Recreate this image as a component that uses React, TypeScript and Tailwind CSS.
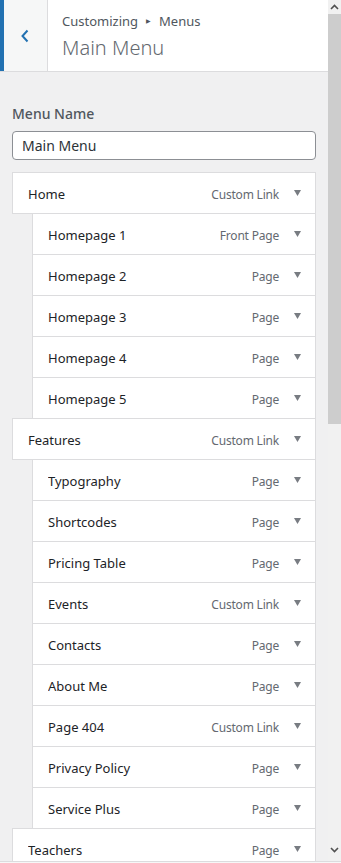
import React from "react";

type Item = { title: string; type: string; depth: number };

const items: Item[] = [
  { title: "Home", type: "Custom Link", depth: 0 },
  { title: "Homepage 1", type: "Front Page", depth: 1 },
  { title: "Homepage 2", type: "Page", depth: 1 },
  { title: "Homepage 3", type: "Page", depth: 1 },
  { title: "Homepage 4", type: "Page", depth: 1 },
  { title: "Homepage 5", type: "Page", depth: 1 },
  { title: "Features", type: "Custom Link", depth: 0 },
  { title: "Typography", type: "Page", depth: 1 },
  { title: "Shortcodes", type: "Page", depth: 1 },
  { title: "Pricing Table", type: "Page", depth: 1 },
  { title: "Events", type: "Custom Link", depth: 1 },
  { title: "Contacts", type: "Page", depth: 1 },
  { title: "About Me", type: "Page", depth: 1 },
  { title: "Page 404", type: "Custom Link", depth: 1 },
  { title: "Privacy Policy", type: "Page", depth: 1 },
  { title: "Service Plus", type: "Page", depth: 1 },
  { title: "Teachers", type: "Page", depth: 0 },
];

const MenuItem = ({ item }: { item: Item }) => (
  <div className={item.depth ? "pl-5 -mt-px" : "-mt-px"}>
    <div className="flex items-center h-[42px] bg-white border border-[#dcdcde] pl-[15px] pr-[14px] pt-[3px]">
      <span className="flex-1 text-[13px] text-[#1d2327] truncate">{item.title}</span>
      <span className="text-[12px] tracking-[-0.2px] text-[#646970]">{item.type}</span>
      <svg width="7" height="6" viewBox="0 0 7 6" className="ml-[15px] mb-[3px]">
        <path d="M0 0 L7 0 L3.5 6 Z" fill="#787c82" />
      </svg>
    </div>
  </div>
);

const Scrollbar = () => (
  <div className="w-[13px] flex flex-col bg-[#f1f1f1] shrink-0">
    <div className="h-[14px] flex items-center justify-center">
      <svg width="9" height="6" viewBox="0 0 9 6">
        <path d="M1 5 L4.5 1.5 L8 5" stroke="#505050" strokeWidth="1.6" fill="none" />
      </svg>
    </div>
    <div className="h-[410px] bg-[#cdcdcd]" />
    <div className="flex-1" />
    <div className="h-[20px] flex items-start justify-center pt-[6px]">
      <svg width="9" height="6" viewBox="0 0 9 6">
        <path d="M1 1 L4.5 4.5 L8 1" stroke="#505050" strokeWidth="1.6" fill="none" />
      </svg>
    </div>
  </div>
);

export default function App() {
  return (
    <div
      className="w-[341px] h-[863px] flex flex-col overflow-hidden bg-[#f0f0f1]"
      style={{ fontFamily: '"Noto Sans", "Open Sans", sans-serif' }}
    >
      <div className="flex flex-1 min-h-0">
        <div className="w-[328px] flex flex-col min-h-0 overflow-hidden">
          <div className="flex h-[72px] bg-white border-b border-[#dcdcde] shrink-0">
            <div className="w-[48px] bg-[#f6f7f7] border-l-4 border-[#2271b1] border-r border-r-[#dcdcde] flex items-center justify-center">
              <svg width="10" height="14" viewBox="0 0 10 14" className="-ml-[2px]">
                <path d="M7.5 1.5 L2.5 7 L7.5 12.5" stroke="#2271b1" strokeWidth="2" fill="none" />
              </svg>
            </div>
            <div className="flex flex-col pl-[14px] pt-[12px]">
              <div className="text-[13px] text-[#50575e] flex items-center gap-[8px]">
                <span>Customizing</span>
                <span className="text-[6px]">▶</span>
                <span>Menus</span>
              </div>
              <div className="text-[20px] font-light text-[#646970] leading-[26px] mt-[3px]">Main Menu</div>
            </div>
          </div>
          <div className="px-3 pt-[32px]">
            <div className="text-[14px] font-medium text-[#50575e] leading-[20px]">Menu Name</div>
            <div className="mt-[7px] h-[29px] bg-white border border-[#8c8f94] rounded-[4px] flex items-center px-[9px] text-[14px] text-[#2c3338]">
              Main Menu
            </div>
            <div className="mt-[13px]">
              {items.map((it) => (
                <MenuItem key={it.title} item={it} />
              ))}
            </div>
          </div>
        </div>
        <Scrollbar />
      </div>
      <div className="h-[2px] border-t border-[#dcdcde] bg-[#f6f7f7] shrink-0" />
    </div>
  );
}
